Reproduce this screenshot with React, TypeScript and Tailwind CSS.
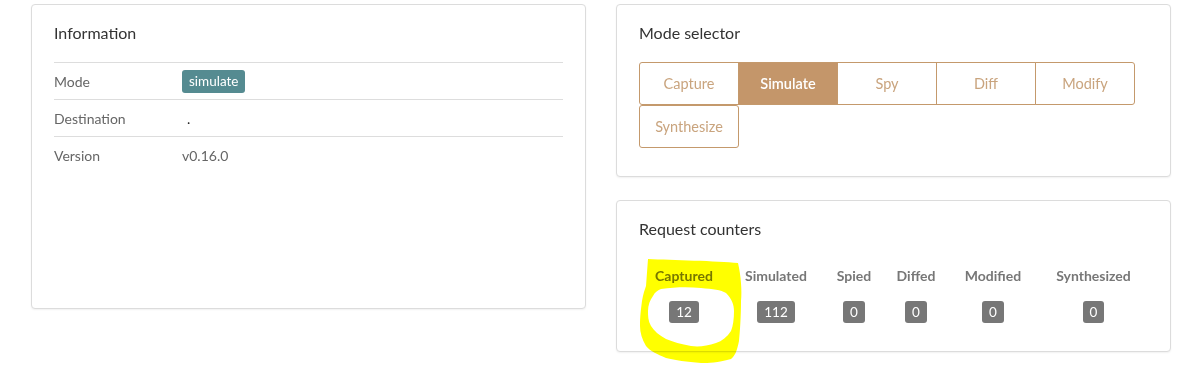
const info = [
  { label: "Mode", value: "simulate", badge: true },
  { label: "Destination", value: "." },
  { label: "Version", value: "v0.16.0" },
];

const modes = ["Capture", "Simulate", "Spy", "Diff", "Modify", "Synthesize"];

const counters = [
  { label: "Captured", count: 12 },
  { label: "Simulated", count: 112 },
  { label: "Spied", count: 0 },
  { label: "Diffed", count: 0 },
  { label: "Modified", count: 0 },
  { label: "Synthesized", count: 0 },
];

function Card({ title, className, children }: { title: string; className?: string; children?: React.ReactNode }) {
  return (
    <div
      className={
        "relative rounded-[4px] border border-[#dcdcdc] bg-white px-[22px] pt-[18px] shadow-[0_1px_2px_rgba(0,0,0,0.06)] " +
        (className ?? "")
      }
    >
      <h3 className="text-[16px] leading-[20px] text-[#333]">{title}</h3>
      {children}
    </div>
  );
}

export default function App() {
  return (
    <div className="min-h-screen bg-white pl-[31px] pr-[20px] pt-[4px] font-['Lato',sans-serif]">
      <div className="grid grid-cols-2 gap-[30px]">
        <Card title="Information" className="h-[305px]">
          <div className="mt-[19px]">
            {info.map((row) => (
              <div
                key={row.label}
                className="flex h-[37px] items-center border-t border-[#dddddd] text-[14px] text-[#666]"
              >
                <span className="w-[128px]">{row.label}</span>
                {row.badge ? (
                  <span className="rounded-[3px] bg-[#558b91] px-[7px] py-[3px] text-[13.5px] leading-[17px] text-white">
                    {row.value}
                  </span>
                ) : (
                  <span className={row.value === "." ? "pl-[5px] text-[#222]" : ""}>{row.value}</span>
                )}
              </div>
            ))}
          </div>
        </Card>

        <div className="flex flex-col gap-[23px]">
          <Card title="Mode selector" className="h-[173px]">
            <div className="mt-[19px] flex flex-wrap pl-px">
              {modes.map((m, i) => (
                <button
                  key={m}
                  className={
                    "-ml-px flex h-[43px] w-[100px] items-center justify-center border border-[#c4996c] text-[14.5px] " +
                    (m === "Simulate"
                      ? "bg-[#c4966a] font-semibold text-white"
                      : "bg-white text-[#c9a47e]") +
                    (i === 0 ? " rounded-l-[3px]" : "") +
                    (i === 4 ? " rounded-r-[3px]" : "") +
                    (i === 5 ? " rounded-[3px]" : "")
                  }
                >
                  {m}
                </button>
              ))}
            </div>
          </Card>

          <Card title="Request counters" className="h-[152px]">
            <div className="mt-[27px] grid grid-cols-[90px_94px_62px_62px_92px_1fr] text-center">
              {counters.map((c) => (
                <div key={c.label} className="flex flex-col items-center">
                  <span className="text-[14px] font-bold leading-[20px] text-[#777]">{c.label}</span>
                  <span className="mt-[15px] flex h-[22px] items-center rounded-[3px] bg-[#777] px-[7px] text-[13.5px] text-white">
                    {c.count}
                  </span>
                </div>
              ))}
            </div>
            <svg
              className="pointer-events-none absolute left-0 top-0 overflow-visible mix-blend-multiply"
              width="10"
              height="10"
            >
              <path
                fillRule="evenodd"
                fill="#ffff00"
                d="M31 58 C55 59 100 60 121 62 C124 75 125 90 124 100 C124 115 123 130 122 140 C120 150 118 155 114 158 C100 162 92 162 84 162 C70 161 58 159 49 157 C40 153 33 150 29 145 C25 138 23 132 23 125 C23 115 24 108 25 100 C26 93 28 88 29 85 Z M44 88 C58 86 72 86 84 87 C96 88 104 89 109 92 C115 98 117 104 117 110 C117 118 116 125 114 130 C110 136 105 140 99 142 C90 145 82 146 74 145 C64 143 56 141 49 138 C42 134 37 130 34 125 C31 120 31 115 31 110 C31 104 33 99 36 95 C38 91 41 89 44 88 Z"
              />
            </svg>
          </Card>
        </div>
      </div>
    </div>
  );
}
